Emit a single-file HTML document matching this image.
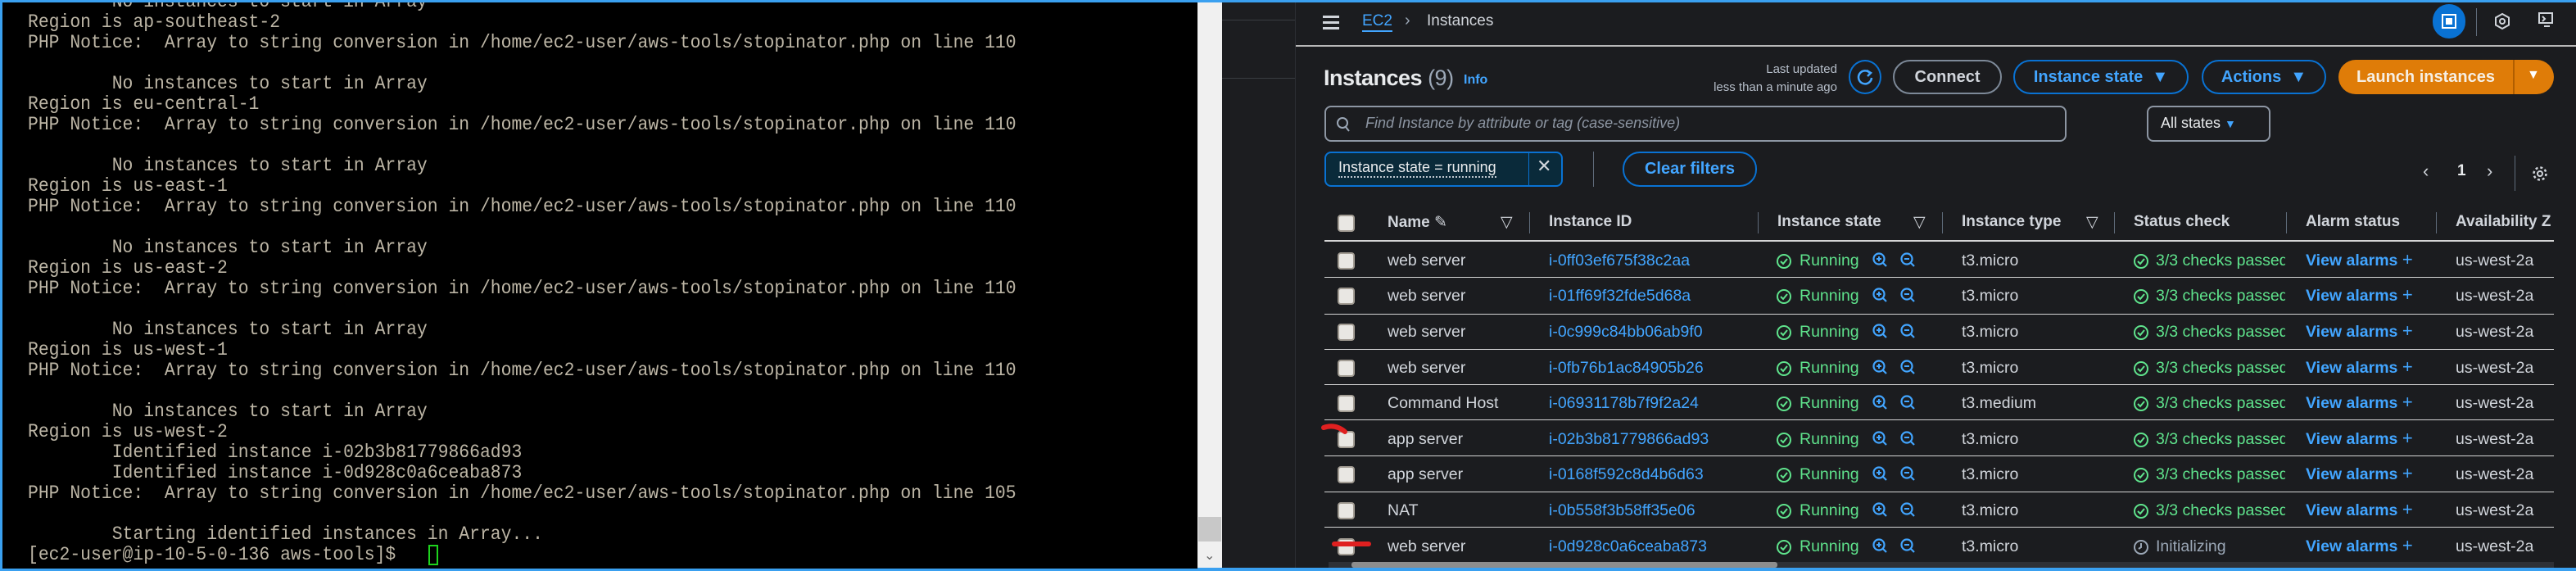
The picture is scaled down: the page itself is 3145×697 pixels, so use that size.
<!DOCTYPE html>
<html><head><meta charset="utf-8">
<style>
*{margin:0;padding:0;box-sizing:border-box}
body{width:3145px;height:697px;overflow:hidden;background:#1b1c1f;position:relative;font-family:"Liberation Sans",sans-serif}
.a{position:absolute;white-space:nowrap}
#term{position:absolute;left:3px;top:3px;width:1459px;height:691px;background:#000;overflow:hidden}
#term pre{position:absolute;left:31px;top:-13px;font-family:"Liberation Mono",monospace;font-size:23px;line-height:25px;color:#bdb6a6;transform:scaleX(0.93);transform-origin:0 0}
.btn{position:absolute;height:42px;border-radius:21px;border:2px solid #0972d3;color:#42a5ff;font-size:20px;font-weight:bold;display:flex;align-items:center;justify-content:center}
.hd{position:absolute;top:260px;font-size:19px;font-weight:bold;color:#d1d5db;white-space:nowrap}
.sep{position:absolute;width:1px;background:#5f6b7a}
.row{position:absolute;left:1617px;width:1501px;height:1px;background:#d5d5d5}
.cb{position:absolute;left:1633px;width:21px;height:21px;background:#e9e7e3;border:2px solid #a29c93;border-radius:4px}
.t{position:absolute;font-size:19.5px;color:#d1d5db;white-space:nowrap}
.id{color:#42a5ff}
.run{color:#5fe38c}
.va{color:#42a5ff;font-weight:bold}
</style></head><body>
<div class="a" style="left:0;top:0;width:3145px;height:3px;background:#3aa0f0"></div>
<div class="a" style="left:0;top:0;width:3px;height:697px;background:#3aa0f0"></div>
<div class="a" style="left:0;top:693px;width:3145px;height:4px;background:#3aa0f0"></div>
<div id="term"><pre>        No instances to start in Array
Region is ap-southeast-2
PHP Notice:  Array to string conversion in /home/ec2-user/aws-tools/stopinator.php on line 110

        No instances to start in Array
Region is eu-central-1
PHP Notice:  Array to string conversion in /home/ec2-user/aws-tools/stopinator.php on line 110

        No instances to start in Array
Region is us-east-1
PHP Notice:  Array to string conversion in /home/ec2-user/aws-tools/stopinator.php on line 110

        No instances to start in Array
Region is us-east-2
PHP Notice:  Array to string conversion in /home/ec2-user/aws-tools/stopinator.php on line 110

        No instances to start in Array
Region is us-west-1
PHP Notice:  Array to string conversion in /home/ec2-user/aws-tools/stopinator.php on line 110

        No instances to start in Array
Region is us-west-2
        Identified instance i-02b3b81779866ad93
        Identified instance i-0d928c0a6ceaba873
PHP Notice:  Array to string conversion in /home/ec2-user/aws-tools/stopinator.php on line 105

        Starting identified instances in Array...
[ec2-user@ip-10-5-0-136 aws-tools]$ </pre>
<div class="a" style="left:520px;top:662px;width:12px;height:25px;border:2px solid #1ed31e"></div>
</div>
<div class="a" style="left:1462px;top:3px;width:30px;height:690px;background:#f0f0f0"></div>
<div class="a" style="left:1463px;top:631px;width:28px;height:30px;background:#c8c8c8"></div>
<div class="a" style="left:1470px;top:668px;font-size:16px;color:#666">&#8964;</div>
<div class="a" style="left:1492px;top:3px;width:89px;height:690px;background:#1c1d20"></div>
<div class="a" style="left:1492px;top:24px;width:89px;height:1px;background:#3a3d42"></div>
<div class="a" style="left:1492px;top:95px;width:89px;height:1px;background:#3a3d42"></div>
<div class="a" style="left:1581px;top:3px;width:1px;height:690px;background:#2c2e33"></div>

<div class="a" style="left:1582px;top:55px;width:1563px;height:2px;background:#b8b8b8"></div>
<div class="a" style="left:1615px;top:19px;width:20px;height:3px;background:#d1d5db;box-shadow:0 7px 0 #d1d5db,0 14px 0 #d1d5db"></div>
<div class="a" style="left:1663px;top:15px;font-size:19px;color:#42a5ff;border-bottom:2px solid #42a5ff;line-height:22px">EC2</div>
<div class="a" style="left:1715px;top:14px;font-size:20px;color:#9ba7b6">&#x203A;</div>
<div class="a" style="left:1742px;top:15px;font-size:19px;color:#d1d5db">Instances</div>
<div class="a" style="left:2970px;top:5px;width:40px;height:42px;border-radius:20px;background:#0972d3"></div>
<div class="a" style="left:2981px;top:17px;width:18px;height:18px;border:2px solid #fff;background:#fff;box-shadow:inset 0 0 0 3px #0972d3"></div>
<div class="a" style="left:3023px;top:10px;width:1px;height:34px;background:#5f6b7a"></div>
<svg class="a" style="left:3044px;top:15px" width="22" height="22" viewBox="0 0 22 22"><path d="M11 2 L19 6.5 V15.5 L11 20 L3 15.5 V6.5Z" fill="none" stroke="#d1d5db" stroke-width="2"/><circle cx="11" cy="11" r="3" fill="none" stroke="#d1d5db" stroke-width="2"/></svg>
<svg class="a" style="left:3097px;top:14px" width="24" height="24" viewBox="0 0 24 24"><rect x="3" y="2" width="16" height="12" fill="none" stroke="#d1d5db" stroke-width="2"/><path d="M7 6 L10 9 L7 12 M9 18 H16" stroke="#d1d5db" stroke-width="2" fill="none"/></svg>

<div class="a" style="left:1616px;top:80px;font-size:27px;font-weight:bold;color:#e9ebed;letter-spacing:-0.5px">Instances <span style="font-weight:normal;color:#9ba7b6">(9)</span></div>
<div class="a" style="left:1787px;top:89px;font-size:16px;font-weight:bold;color:#42a5ff">Info</div>
<div class="a" style="left:2080px;top:74px;width:163px;text-align:right;font-size:15px;color:#b6bec9;line-height:22px">Last updated<br>less than a minute ago</div>
<div class="a" style="left:2257px;top:73px;width:40px;height:42px;border-radius:50%;border:2px solid #0972d3"></div>
<svg class="a" style="left:2265px;top:82px" width="24" height="24" viewBox="0 0 24 24"><path d="M18 7 A8 8 0 1 0 20 13" fill="none" stroke="#42a5ff" stroke-width="2.5"/><path d="M14 4 L19 7 L15 11" fill="none" stroke="#42a5ff" stroke-width="2.5"/></svg>
<div class="btn" style="left:2311px;top:73px;width:133px;border-color:#7d8998;color:#d1d5db">Connect</div>
<div class="btn" style="left:2458px;top:73px;width:214px">Instance state &nbsp;▼</div>
<div class="btn" style="left:2688px;top:73px;width:152px">Actions &nbsp;▼</div>
<div class="a" style="left:2855px;top:73px;width:263px;height:42px;border-radius:21px;background:#df7c08"></div>
<div class="a" style="left:2855px;top:73px;width:213px;height:42px;color:#f6efe4;font-size:20px;font-weight:bold;display:flex;align-items:center;justify-content:center">Launch instances</div>
<div class="a" style="left:3068px;top:73px;width:2px;height:42px;background:#b05e00"></div>
<div class="a" style="left:3085px;top:83px;font-size:16px;color:#fff">▼</div>

<div class="a" style="left:1617px;top:129px;width:906px;height:44px;border:2px solid #8d96a3;border-radius:8px;background:#1b1c1f"></div>
<svg class="a" style="left:1631px;top:142px" width="18" height="20" viewBox="0 0 18 20"><circle cx="8" cy="8" r="6" fill="none" stroke="#9ba7b6" stroke-width="2"/><path d="M12 13 L16 18" stroke="#9ba7b6" stroke-width="2"/></svg>
<div class="a" style="left:1667px;top:140px;font-size:18px;font-style:italic;color:#8d96a3">Find Instance by attribute or tag (case-sensitive)</div>
<div class="a" style="left:2621px;top:129px;width:151px;height:44px;border:2px solid #8d96a3;border-radius:8px"></div>
<div class="a" style="left:2638px;top:140px;font-size:18px;color:#e9ebed">All states <span style="color:#42a5ff;font-size:14px">▼</span></div>

<div class="a" style="left:1617px;top:185px;width:291px;height:43px;border:2px solid #0972d3;border-radius:8px;background:#0a2a3a"></div>
<div class="a" style="left:1634px;top:194px;font-size:18px;color:#e9ebed;border-bottom:2px dotted #c0c8d0;line-height:21px">Instance state = running</div>
<div class="a" style="left:1866px;top:187px;width:1px;height:39px;background:#0972d3"></div>
<div class="a" style="left:1876px;top:190px;font-size:22px;color:#d1d5db">✕</div>
<div class="a" style="left:1945px;top:185px;width:1px;height:43px;background:#5f6b7a"></div>
<div class="btn" style="left:1981px;top:185px;width:164px;height:43px">Clear filters</div>
<div class="a" style="left:2958px;top:196px;font-size:22px;color:#d1d5db">&#x2039;</div>
<div class="a" style="left:3000px;top:198px;font-size:19px;color:#e9ebed;font-weight:bold">1</div>
<div class="a" style="left:3036px;top:196px;font-size:22px;color:#d1d5db">&#x203A;</div>
<div class="a" style="left:3070px;top:190px;width:1px;height:43px;background:#5f6b7a"></div>
<svg class="a" style="left:3090px;top:201px" width="22" height="22" viewBox="0 0 22 22"><circle cx="11" cy="11" r="3" fill="none" stroke="#d1d5db" stroke-width="2"/><circle cx="11" cy="11" r="7.5" fill="none" stroke="#d1d5db" stroke-width="2.5" stroke-dasharray="3 2.9"/></svg>

<div class="cb" style="top:262px"></div>
<div class="hd" style="left:1694px">Name <span style="font-weight:normal">&#x270E;</span></div>
<div class="hd" style="left:1832px;font-weight:normal">▽</div>
<div class="sep" style="left:1867px;top:259px;height:26px"></div>
<div class="hd" style="left:1891px">Instance ID</div>
<div class="sep" style="left:2146px;top:259px;height:26px"></div>
<div class="hd" style="left:2170px">Instance state</div>
<div class="hd" style="left:2336px;font-weight:normal">▽</div>
<div class="sep" style="left:2371px;top:259px;height:26px"></div>
<div class="hd" style="left:2395px">Instance type</div>
<div class="hd" style="left:2547px;font-weight:normal">▽</div>
<div class="sep" style="left:2581px;top:259px;height:26px"></div>
<div class="hd" style="left:2605px">Status check</div>
<div class="sep" style="left:2791px;top:259px;height:26px"></div>
<div class="hd" style="left:2815px">Alarm status</div>
<div class="sep" style="left:2974px;top:259px;height:26px"></div>
<div class="hd" style="left:2998px">Availability Z</div>
<div class="row" style="top:293px;height:2px"></div>

<svg width="0" height="0" style="position:absolute"><defs>
<g id="ok"><circle cx="10" cy="10" r="8" fill="none" stroke="currentColor" stroke-width="2"/><path d="M6 10 L9 13 L14 7" fill="none" stroke="currentColor" stroke-width="2"/></g>
<g id="zi"><circle cx="8" cy="8" r="6.5" fill="none" stroke="#42a5ff" stroke-width="2.2"/><path d="M13 13 L17 17" stroke="#42a5ff" stroke-width="2.2"/></g>
</defs></svg>

<div id="rows"></div>
<script>
var d=[["web server","i-0ff03ef675f38c2aa","t3.micro",1],["web server","i-01ff69f32fde5d68a","t3.micro",1],["web server","i-0c999c84bb06ab9f0","t3.micro",1],["web server","i-0fb76b1ac84905b26","t3.micro",1],["Command Host","i-06931178b7f9f2a24","t3.medium",1],["app server","i-02b3b81779866ad93","t3.micro",1],["app server","i-0168f592c8d4b6d63","t3.micro",1],["NAT","i-0b558f3b58ff35e06","t3.micro",1],["web server","i-0d928c0a6ceaba873","t3.micro",0]];
var c=[319,362,406,450,493,537,580,624,668],L=[338,383,426,469,512,556,600,643],h="";
for(var i=0;i<9;i++){var y=c[i],r=d[i],ty=y-12;
h+='<div class="cb" style="top:'+(y-11)+'px"></div>';
h+='<div class="t" style="left:1694px;top:'+ty+'px">'+r[0]+'</div>';
h+='<div class="t id" style="left:1891px;top:'+ty+'px">'+r[1]+'</div>';
h+='<svg class="a" style="left:2168px;top:'+(y-10)+'px;color:#5fe38c" width="20" height="20"><use href="#ok"/></svg>';
h+='<div class="t run" style="left:2197px;top:'+ty+'px">Running</div>';
h+='<svg class="a" style="left:2286px;top:'+(y-11)+'px" width="20" height="20"><use href="#zi"/><path d="M5 8 H11 M8 5 V11" stroke="#42a5ff" stroke-width="2"/></svg>';
h+='<svg class="a" style="left:2320px;top:'+(y-11)+'px" width="20" height="20"><use href="#zi"/><path d="M5 8 H11" stroke="#42a5ff" stroke-width="2"/></svg>';
h+='<div class="t" style="left:2395px;top:'+ty+'px">'+r[2]+'</div>';
if(r[3]){h+='<svg class="a" style="left:2604px;top:'+(y-10)+'px;color:#5fe38c" width="20" height="20"><use href="#ok"/></svg><div class="t run" style="left:2632px;top:'+ty+'px;width:158px;overflow:hidden">3/3 checks passed</div>';}
else{h+='<svg class="a" style="left:2604px;top:'+(y-10)+'px" width="20" height="20"><circle cx="10" cy="10" r="8" fill="none" stroke="#9ba7b6" stroke-width="2"/><path d="M10 5 V10 L7 12" fill="none" stroke="#9ba7b6" stroke-width="2"/></svg><div class="t" style="left:2632px;top:'+ty+'px;color:#9ba7b6">Initializing</div>';}
h+='<div class="t va" style="left:2815px;top:'+ty+'px">View alarms <span style="font-weight:normal;font-size:22px;line-height:18px">+</span></div>';
h+='<div class="t" style="left:2998px;top:'+ty+'px">us-west-2a</div>';
if(i<8)h+='<div class="row" style="top:'+L[i]+'px"></div>';}
document.getElementById('rows').innerHTML=h;
</script>
<svg class="a" style="left:1612px;top:515px" width="50" height="25"><path d="M4 7 Q18 2 30 12" fill="none" stroke="#e02020" stroke-width="6" stroke-linecap="round"/></svg>
<div class="a" style="left:1626px;top:661px;width:48px;height:6px;border-radius:3px;background:#e02020"></div>
<div class="a" style="left:1622px;top:686px;width:1496px;height:7px;background:#2e3035"></div>
<div class="a" style="left:1650px;top:686px;width:520px;height:7px;background:#8d8d8d;border-radius:3px"></div>
</body></html>
